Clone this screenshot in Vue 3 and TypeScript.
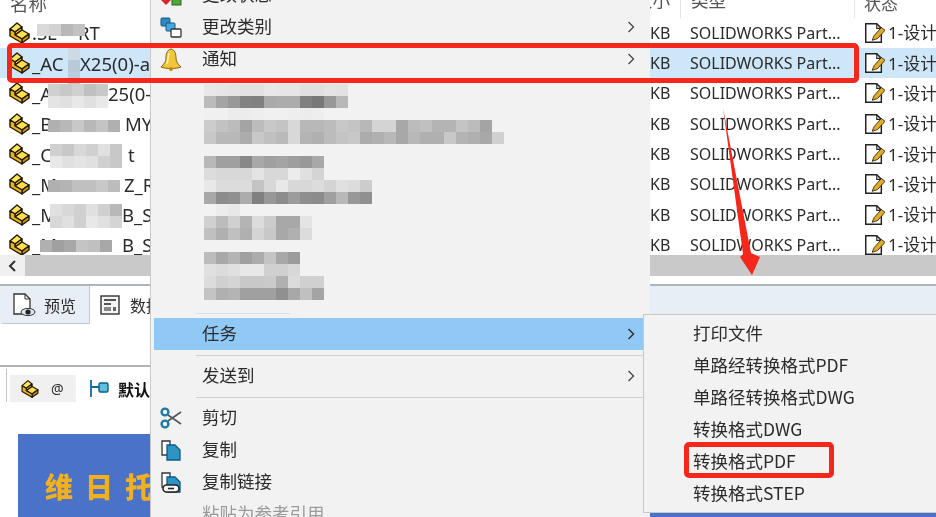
<script setup lang="ts">
interface FileRow {
  pre: string
  postX: number
  post: string
  x: number
  y: number
  cells: string[][]
  active?: boolean
}

const rows: FileRow[] = [
  { pre: '.SL', postX: 78, post: 'RT', x: 37, y: 6, cells: [['#dadada', '#d2d2d2', '#b8b8b8', '#c2c2c2']] },
  { pre: '_AC', postX: 80, post: 'X25(0)-a', x: 68, y: 0, cells: [['#cdd9e4'], ['#b8cad8'], ['#bccdda']], active: true },
  { pre: '_A', postX: 108, post: '25(0-I', x: 48, y: 6, cells: [['#d0d0d0', '#c8c8c8', '#d0d0d0', '#c0c0c0', '#c8c8c8'], ['#e4e4e4', '#e0e0e0', '#e8e8e8', '#e0e0e0', '#e8e8e8']] },
  { pre: '_B', postX: 125, post: 'MY', x: 48, y: 11, cells: [['#b0b0b0', '#b8b8b8', '#c8c8c8', '#b8b8b8', '#c4c4c4', '#b0b0b0']] },
  { pre: '_C', postX: 128, post: 't', x: 50, y: 5, cells: [['#d0d0d0', '#c8c8c8', '#d8d8d8', '#d0d0d0', '#e0e0e0', '#c8c8c8'], ['#e8e8e8', '#e0e0e0', '#e4e4e4', '#e0e0e0', '#d0d0d0', '#c8c8c8']] },
  { pre: '_M', postX: 124, post: 'Z_R', x: 48, y: 11, cells: [['#b0b0b0', '#b4b4b4', '#c0c0c0', '#c0c0c0', '#c8c8c8', '#bcbcbc']] },
  { pre: '_M', postX: 122, post: 'B_S', x: 50, y: 5, cells: [['#e0e0e0', '#d8d8d8', '#d0d0d0', '#e0e0e0', '#d0d0d0', '#b8b8b8'], ['#d8d8d8', '#e0e0e0', '#d0d0d0', '#e8e8e8', '#e0e0e0', '#d4d4d4']] },
  { pre: '_M', postX: 122, post: 'B_S', x: 40, y: 10, cells: [['#b0b0b0', '#a0a0a0', '#a8a8a8', '#c4c4c4', '#c0c0c0', '#a8a8a8']] },
]

// grey levels of the pixelated block in the menu, one string per 12px line
const mosaic = [
  'e8 e6 e4 e2 e2 e8 e6 e6 e0 e0 e4 e2',
  'bb a4 98 82 80 aa ac ac 80 78 98 b8',
  'f0 f0 ec ec ee f0 f0 ee ec ee',
  'cc c2 bc a4 bc c8 c4 d8 b8 b8 bc c8 c4 b8 d4 d4 a8 bc c0 b4 b4 c4 bc a4',
  'c8 b8 b8 ac c8 c0 ba d8 b4 b0 bc c4 c8 ac b0 b8 a8 b8 b0 b0 c8 b4 b0 a8 d0',
  'f2 f2 f2',
  'b8 a0 a0 88 a8 a0 a4 9e 98 a8',
  'dc d8 d8 d8 e4 d8 d8 ec e0 d4',
  'e8 dc dc dc c4 d8 e8 d8 d8 dc d4 e0 dc cc',
  'a8 8c 90 ac 80 98 8c 9c 8e 8c a0 b8 98 90',
  'f2 ec e8',
  'd0 bc d0 b4 dc cc a8 a8 e4',
  'c0 b0 c0 b0 d4 c8 a8 b0 dc',
  'f2',
  'bc a8 b4 a0 ac c4 a8 9c',
  'e0 dc e0 e8 e8 d0 d0 d8',
  'dc d0 d4 c8 c8 ca b0 dc d0 d0',
  'c4 b0 b4 a0 a0 a0 90 a8 c0 a4',
].map((line) => line.split(' ').map((g) => '#' + g + g + g))

const subItems = ['打印文件', '单路经转换格式PDF', '单路径转换格式DWG', '转换格式DWG', '转换格式PDF', '转换格式STEP']
</script>

<template>
  <div class="page">
    <svg width="0" height="0" class="defs">
      <defs>
        <symbol id="part" viewBox="0 0 23 24">
          <g stroke="#1f1804" stroke-width="1.4" stroke-linejoin="round">
            <path d="M2 8L7 11L14 6L9 2Z" fill="#ffe55a" />
            <path d="M7 11V14L14 9V6Z" fill="#f8c61e" />
            <path d="M7 14L14 18L21 13L14 9Z" fill="#ffdf4a" />
            <path d="M14 18V22L21 17V13Z" fill="#c8920c" />
            <path d="M2 8V15L14 22V18L7 14V11Z" fill="#ecb414" />
          </g>
        </symbol>
        <symbol id="doc" viewBox="0 0 24 24">
          <path d="M3 2H15L20 7V22H3Z" fill="#fff" stroke="#222" stroke-width="1.6" />
          <path d="M15 2V7H20" fill="none" stroke="#222" stroke-width="1.2" />
          <path d="M10 20L12 15L20 6L24 9L16 18Z" fill="#e0ac2c" stroke="#3a2c08" stroke-width="1" />
        </symbol>
      </defs>
    </svg>

    <section class="list">
      <div class="row head">
        <div class="name"><span class="head-text head-name">名称</span></div>
        <div class="size"><span class="head-text head-size">大小</span></div>
        <div class="type"><span class="head-text">类型</span></div>
        <div class="status"><span class="head-text">状态</span></div>
      </div>
      <div v-for="(row, idx) in rows" :key="idx" class="row" :class="{ active: row.active }">
        <div class="name">
          <svg class="part" width="23" height="24"><use href="#part" /></svg>
          <span class="pre" :style="{ width: row.postX - 32 + 'px' }">{{ row.pre }}</span>
          <span>{{ row.post }}</span>
          <div class="blur" :style="{ left: row.x + 'px', top: row.y + 'px' }">
            <div v-for="(line, l) in row.cells" :key="l" class="blur-line">
              <i v-for="(c, k) in line" :key="k" :style="{ background: c }"></i>
            </div>
          </div>
        </div>
        <div class="size">KB</div>
        <div class="type">SOLIDWORKS Part...</div>
        <div class="status">
          <svg class="doc" width="22" height="22"><use href="#doc" /></svg>
          <span class="status-text">1-设计中</span>
        </div>
      </div>
    </section>

    <div class="hscroll">
      <div class="hscroll-btn">
        <svg width="9" height="12" viewBox="0 0 9 12"><path d="M7 1L2 6L7 11" fill="none" stroke="#333" stroke-width="2" /></svg>
      </div>
    </div>

    <div class="tabs">
      <div class="tab">
        <svg width="24" height="24" viewBox="0 0 24 24">
          <path d="M2 1H13L18 6V21H2Z" fill="#fff" stroke="#333" stroke-width="1.3" />
          <path d="M13 1V6H18" fill="none" stroke="#333" />
          <ellipse cx="16" cy="19" rx="7" ry="3.6" fill="#dfe6ee" stroke="#333" />
          <circle cx="16" cy="19" r="2.6" fill="#222" />
        </svg>
        <span>预览</span>
      </div>
      <div class="tab current">
        <svg width="20" height="20" viewBox="0 0 20 20">
          <rect x="1" y="1" width="18" height="18" fill="#f4f4f4" stroke="#333" stroke-width="1.4" />
          <path d="M4 5H16M4 9H11" stroke="#555" stroke-width="2" />
          <rect x="4" y="12" width="7" height="4" fill="#888" />
          <rect x="13" y="12" width="3" height="4" fill="#666" />
        </svg>
        <span>数据卡</span>
      </div>
    </div>

    <div class="panel"></div>

    <div class="subtabs">
      <div class="subtab">
        <svg width="20" height="20"><use href="#part" /></svg>
        <b>@</b>
      </div>
      <div class="config">
        <svg width="22" height="20" viewBox="0 0 22 20">
          <path d="M2 1V18M2 8H10" stroke="#0b6f9e" stroke-width="1.8" fill="none" />
          <rect x="10" y="4" width="9" height="9" rx="1.5" fill="#5cc0de" stroke="#0b5f88" stroke-width="1.4" />
        </svg>
        <span>默认</span>
      </div>
    </div>

    <div class="banner"><span>维日托</span></div>

    <div class="menu">
      <div class="item">
        <svg class="ico" width="22" height="22" viewBox="0 0 22 22">
          <path d="M1 16L6 12L11 16L6 21Z" fill="#d8262a" />
          <rect x="12" y="12" width="9" height="9" fill="#4fa63a" stroke="#2c6b1e" />
        </svg>
        <span>更改状态</span>
      </div>
      <div class="item">
        <svg class="ico" width="22" height="22" viewBox="0 0 22 22">
          <rect x="1" y="2" width="9" height="8" rx="1" fill="#2c8ac4" stroke="#0d5a8a" />
          <rect x="6" y="7" width="9" height="8" rx="1" fill="#4aa5d8" stroke="#0d5a8a" />
          <rect x="11" y="13" width="10" height="8" rx="1" fill="#fff" stroke="#333" stroke-width="1.3" />
        </svg>
        <span>更改类别</span>
        <svg class="more" width="8" height="12" viewBox="0 0 8 12"><path d="M1.5 1L6.5 6L1.5 11" fill="none" stroke="#444" stroke-width="1.3" /></svg>
      </div>
      <div class="item">
        <svg class="ico" width="22" height="24" viewBox="0 0 22 24">
          <path d="M11 1C7 2 6 6 6 10C6 14 4 16 1 19C6 21 16 21 21 19C18 16 16 14 16 10C16 6 15 2 11 1Z" fill="#f2c63a" stroke="#7d6414" />
          <path d="M9 5C8 8 8 12 7 16" stroke="#fff3b0" stroke-width="1.6" fill="none" />
          <circle cx="11" cy="21" r="2" fill="#b58a1c" />
        </svg>
        <span>通知</span>
        <svg class="more" width="8" height="12" viewBox="0 0 8 12"><path d="M1.5 1L6.5 6L1.5 11" fill="none" stroke="#444" stroke-width="1.3" /></svg>
      </div>

      <div class="mosaic">
        <div v-for="(line, l) in mosaic" :key="l" class="blur-line">
          <i v-for="(c, k) in line" :key="k" :style="{ background: c }"></i>
        </div>
      </div>
      <div class="sep soft"></div>

      <div class="item selected">
        <span>任务</span>
        <svg class="more" width="8" height="12" viewBox="0 0 8 12"><path d="M1.5 1L6.5 6L1.5 11" fill="none" stroke="#333" stroke-width="1.5" /></svg>
      </div>
      <div class="sep"></div>
      <div class="item">
        <span>发送到</span>
        <svg class="more" width="8" height="12" viewBox="0 0 8 12"><path d="M1.5 1L6.5 6L1.5 11" fill="none" stroke="#444" stroke-width="1.3" /></svg>
      </div>
      <div class="sep"></div>
      <div class="item">
        <svg class="ico" width="22" height="22" viewBox="0 0 22 22">
          <path d="M8 8L21 17M8 14L21 5" stroke="#555" stroke-width="1.6" />
          <circle cx="5" cy="5" r="3.4" fill="none" stroke="#1c7aa8" stroke-width="2.4" />
          <circle cx="5" cy="17" r="3.4" fill="none" stroke="#1c7aa8" stroke-width="2.4" />
        </svg>
        <span>剪切</span>
      </div>
      <div class="item">
        <svg class="ico" width="22" height="22" viewBox="0 0 22 22">
          <path d="M2 2H10V16H2Z" fill="#fff" stroke="#333" stroke-width="1.3" />
          <path d="M7 6H15L20 11V21H7Z" fill="#2f93c4" stroke="#0d5a8a" stroke-width="1.3" />
        </svg>
        <span>复制</span>
      </div>
      <div class="item">
        <svg class="ico" width="22" height="22" viewBox="0 0 22 22">
          <path d="M2 2H10V16H2Z" fill="#fff" stroke="#333" stroke-width="1.3" />
          <path d="M7 6H15L20 11V21H7Z" fill="#2f93c4" stroke="#0d5a8a" stroke-width="1.3" />
          <rect x="3" y="14" width="16" height="7" rx="3.5" fill="#fff" stroke="#222" stroke-width="1.6" />
          <path d="M8 17.5H14" stroke="#222" stroke-width="1.6" />
        </svg>
        <span>复制链接</span>
      </div>
      <div class="item muted"><span>粘贴为参考引用</span></div>
    </div>

    <div class="submenu">
      <div v-for="sub in subItems" :key="sub" class="subitem">{{ sub }}</div>
    </div>

    <div class="mark mark-row"></div>
    <div class="mark mark-pdf"></div>
    <svg class="arrow" width="936" height="517" viewBox="0 0 936 517">
      <path d="M723 108L751 253L760 257L752 275L740 257L743 254Z" fill="#f5261a" />
    </svg>
  </div>
</template>

<style>
html,
body {
  margin: 0;
  background: #fff;
}
</style>

<style scoped>
.page {
  position: relative;
  width: 936px;
  height: 517px;
  overflow: hidden;
  display: flex;
  flex-direction: column;
  background: #fff;
  color: #2b2b2b;
  font-family: "Noto Sans", "Noto Sans CJK SC", sans-serif;
  font-size: 16px;
  filter: blur(0.35px);
}

.defs {
  position: absolute;
}

.list {
  height: 255px;
  flex: none;
  overflow: hidden;
}

.row {
  display: grid;
  grid-template-columns: 650px 30px 174px 82px;
  height: 30.3px;
  align-items: center;
  white-space: nowrap;
}

.row.head {
  height: 17.7px;
  align-items: start;
  color: #555;
  font-size: 17.5px;
}

.head > div {
  height: 17.7px;
  overflow: hidden;
}

.head .type,
.head .status {
  border-left: 1px solid #e4e4e4;
}

.head-text {
  display: block;
  margin-top: -10px;
  line-height: 20px;
}

.name .head-name {
  padding-left: 2px;
}

.size .head-size {
  margin-left: -15px;
  width: 36px;
  text-align: left;
}

.row.active {
  background: #cde6f8;
}

.name {
  position: relative;
  display: flex;
  align-items: center;
  height: 100%;
  padding-left: 8px;
  font-size: 18.5px;
}

.part {
  flex: none;
  margin-right: 1px;
}

.pre {
  flex: none;
  overflow: hidden;
}

.blur {
  position: absolute;
}

.blur-line {
  display: flex;
  height: 12px;
}

.blur-line i {
  display: block;
  width: 12px;
  height: 12px;
}

.size {
  text-align: right;
  padding-right: 10px;
}

.type {
  padding-left: 10px;
  overflow: hidden;
}

.status {
  display: flex;
  align-items: center;
  gap: 3px;
  padding-left: 9px;
  overflow: hidden;
  font-size: 17px;
}

.status-text {
  margin-top: -2px;
}

.doc {
  flex: none;
}

.hscroll {
  height: 21px;
  flex: none;
  background: #c9c9c9;
}

.hscroll-btn {
  width: 25px;
  height: 100%;
  background: #f0f0f0;
  display: flex;
  align-items: center;
  justify-content: center;
}

.tabs {
  display: flex;
  flex: none;
  height: 38px;
  margin-top: 8px;
  padding-left: 2px;
  border-top: 2px solid #aeb4bc;
  background: #e8eef6;
}

.tab {
  width: 88px;
  display: flex;
  align-items: center;
  gap: 8px;
  padding-left: 10px;
  box-sizing: border-box;
  border-right: 1px solid #c2c8d2;
  border-bottom: 1px solid #c2c8d2;
}

.tab.current {
  background: #fff;
  border: none;
  width: 140px;
  gap: 10px;
}

.panel {
  height: 41px;
  flex: none;
  border-bottom: 2px solid #b4b4b4;
}

.subtabs {
  display: flex;
  flex: none;
  height: 33px;
  margin: 2px 0 0 6px;
  padding: 6px 0 0 3px;
  border-left: 1px solid #c4c4c4;
  box-sizing: border-box;
}

.subtab {
  width: 66px;
  display: flex;
  align-items: center;
  gap: 11px;
  padding-left: 10px;
  box-sizing: border-box;
  background: #f0f0f0;
}

.subtab b {
  font-weight: 400;
  font-size: 14px;
}

.config {
  display: flex;
  align-items: center;
  gap: 7px;
  padding-left: 13px;
  font-weight: 700;
  color: #111;
}

.banner {
  flex: none;
  height: 83px;
  box-sizing: border-box;
  margin: 32px 0 0 18px;
  padding: 21px 0 0 27px;
  background: #4a72c8;
  display: flex;
  align-items: center;
  color: #f2b01e;
  font-family: "Noto Sans CJK SC", sans-serif;
  font-size: 28px;
  font-weight: 900;
  letter-spacing: 12px;
}

.menu {
  position: absolute;
  left: 150px;
  top: -21px;
  bottom: 0;
  width: 500px;
  box-sizing: border-box;
  padding-left: 3px;
  background: #f2f2f2;
  border-left: 1px solid #c8c8c8;
  font-family: "Noto Sans CJK SC", sans-serif;
  font-size: 17.5px;
}

.item {
  position: relative;
  height: 32px;
  box-sizing: border-box;
  padding: 0 0 3px 48px;
  display: flex;
  align-items: center;
  white-space: nowrap;
}

.item.selected {
  background: #90c8f6;
  margin-right: 7px;
}

.item.muted {
  color: #9a9a9a;
}

.ico {
  position: absolute;
  left: 6px;
  top: 5px;
}

.more {
  position: absolute;
  left: 473px;
  top: 10px;
}

.mosaic {
  padding: 9px 0 0 50px;
}

.sep {
  height: 1px;
  margin: 4.5px 7px 4.5px 42px;
  background: #d0d0d0;
}

.sep.soft {
  margin: 13px 360px 4px 42px;
  background: #cfe3f3;
}

.submenu {
  position: absolute;
  left: 643px;
  top: 314px;
  width: 293px;
  height: 199px;
  box-sizing: border-box;
  padding-top: 4px;
  background: #f2f2f2;
  border: 1px solid #c8c8c8;
  border-right: none;
  font-family: "Noto Sans CJK SC", sans-serif;
  font-size: 17.5px;
}

.subitem {
  height: 32px;
  line-height: 27px;
  padding-left: 49px;
  white-space: nowrap;
}

.mark {
  position: absolute;
  box-sizing: border-box;
  border: 5px solid #f5261a;
  border-radius: 5px;
}

.mark-row {
  left: 7px;
  top: 43px;
  width: 852px;
  height: 40px;
}

.mark-pdf {
  left: 684px;
  top: 442px;
  width: 150px;
  height: 36px;
}

.arrow {
  position: absolute;
  left: 0;
  top: 0;
  pointer-events: none;
}
</style>
